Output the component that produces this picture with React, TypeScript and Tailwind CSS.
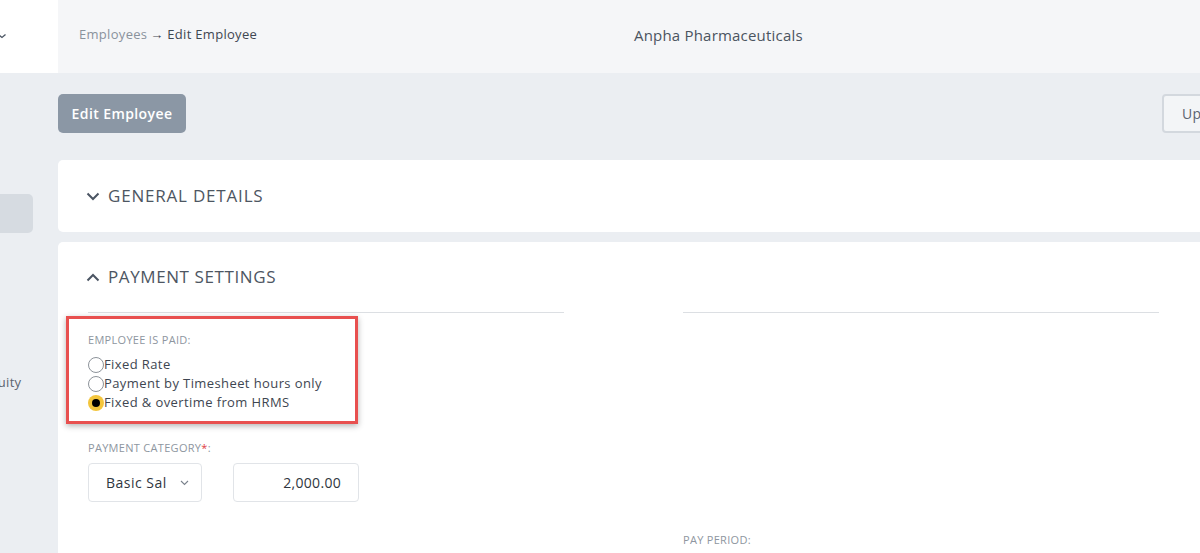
import React from "react";

const font = { fontFamily: '"Open Sans", "Noto Sans", Arial, sans-serif' };

function Radio({ checked, label }: { checked?: boolean; label: string }) {
  return (
    <div className="flex items-center h-[19px]">
      {checked ? (
        <span className="w-[16px] h-[16px] rounded-full bg-[#f3c53c] flex items-center justify-center">
          <span className="w-[8px] h-[8px] rounded-full bg-black" />
        </span>
      ) : (
        <span className="w-[16px] h-[16px] rounded-full border border-[#8d939a] bg-white" />
      )}
      <span className="text-[13px] tracking-[0.4px] text-[#3e4651] leading-none">{label}</span>
    </div>
  );
}

export default function App() {
  return (
    <div className="w-[1200px] h-[553px] overflow-hidden flex bg-[#ebeef2]" style={font}>
      {/* Sidebar */}
      <div className="w-[58px] shrink-0 flex flex-col">
        <div className="h-[73px] bg-white flex items-center pb-[2px]">
          <svg width="8" height="6" viewBox="0 0 8 6" className="-ml-[2px]">
            <path d="M0.5 1.5 L4 4.5 L7.5 1.5" fill="none" stroke="#4b5563" strokeWidth="1.3" />
          </svg>
        </div>
        <div className="flex-1 flex flex-col">
          <div className="mt-[121px] w-[33px] h-[39px] bg-[#d6dbe1] rounded-r-[5px]" />
          <div className="mt-[140px] text-[13px] tracking-[0.3px] text-[#5b6470] -ml-[18px]">Equity</div>
        </div>
      </div>

      {/* Main */}
      <div className="w-[1260px] shrink-0 flex flex-col">
        <div className="h-[73px] bg-[#f5f6f8] flex items-center pl-[21px] pb-[3px]">
          <div className="w-[555px] text-[13px] tracking-[0.3px] flex items-center">
            <span className="text-[#8a929c]">Employees</span>
            <span className="text-[#3f4752] ml-[3px]">→ Edit Employee</span>
          </div>
          <div className="text-[15px] tracking-[0.2px] text-[#4b5460]">Anpha Pharmaceuticals</div>
        </div>

        <div className="flex items-center justify-between pt-[21px] pr-[56px]">
          <button className="h-[39px] w-[128px] rounded-[5px] bg-[#8b97a5] text-white text-[14px] tracking-[0.4px] font-semibold">
            Edit Employee
          </button>
          <div className="h-[39px] w-[100px] rounded-[4px] border-2 border-[#d3d8de] bg-[#f3f5f7] text-[14px] tracking-[0.3px] text-[#5b6470] flex items-center pl-[18px]">
            Update
          </div>
        </div>

        <div className="mt-[27px] bg-white rounded-[5px] h-[72px] flex items-center pl-[28px]">
          <svg width="14" height="9" viewBox="0 0 14 9">
            <path d="M1.5 1.5 L7 7 L12.5 1.5" fill="none" stroke="#4b5563" strokeWidth="2" />
          </svg>
          <span className="ml-[8px] text-[17px] text-[#4d5662] tracking-[0.8px]">GENERAL DETAILS</span>
        </div>

        <div className="mt-[10px] bg-white rounded-t-[5px] flex-1 pl-[30px] pt-[23px]">
          <div className="flex items-center -ml-[2px] h-[24px]">
            <svg width="14" height="9" viewBox="0 0 14 9">
              <path d="M1.5 7.5 L7 2 L12.5 7.5" fill="none" stroke="#4b5563" strokeWidth="2" />
            </svg>
            <span className="ml-[8px] text-[17px] text-[#4d5662] tracking-[0.6px]">PAYMENT SETTINGS</span>
          </div>

          <div className="flex gap-[119px] mt-[23px]">
            <div className="w-[476px] border-t border-[#dcdfe3] relative">
              <div className="absolute left-[-22px] top-[3px] w-[292px] h-[108px] border-[3px] border-[#e8504f] shadow-[0_2px_6px_rgba(0,0,0,0.3)] pointer-events-none" />
              <div className="pt-[21px] text-[11px] tracking-[0.3px] text-[#8e96a0] uppercase leading-[12px]">Employee is paid:</div>
              <div className="mt-[9px] flex flex-col">
                <Radio label="Fixed Rate" />
                <Radio label="Payment by Timesheet hours only" />
                <Radio checked label="Fixed & overtime from HRMS" />
              </div>
              <div className="mt-[30px] text-[11px] tracking-[0.3px] text-[#8e96a0] uppercase leading-[12px]">
                Payment category<span className="text-[#e0403f]">*</span>:
              </div>
              <div className="mt-[9px] flex gap-[31px]">
                <div className="w-[114px] h-[39px] border border-[#e1e4e8] rounded-[4px] flex items-center pl-[17px] pr-[12px] justify-between">
                  <span className="text-[14px] tracking-[0.5px] text-[#2f3640]">Basic Sal</span>
                  <svg width="9" height="6" viewBox="0 0 9 6">
                    <path d="M1 1 L4.5 4.5 L8 1" fill="none" stroke="#7a828c" strokeWidth="1.1" />
                  </svg>
                </div>
                <div className="w-[126px] h-[39px] border border-[#e1e4e8] rounded-[4px] flex items-center justify-end pr-[17px]">
                  <span className="text-[14px] tracking-[0.3px] text-[#2f3640]">2,000.00</span>
                </div>
              </div>
            </div>
            <div className="w-[476px] border-t border-[#dcdfe3]">
              <div className="pt-[221px] text-[11px] tracking-[0.3px] text-[#8e96a0] uppercase leading-[12px]">Pay period:</div>
            </div>
          </div>
        </div>
      </div>
    </div>
  );
}
